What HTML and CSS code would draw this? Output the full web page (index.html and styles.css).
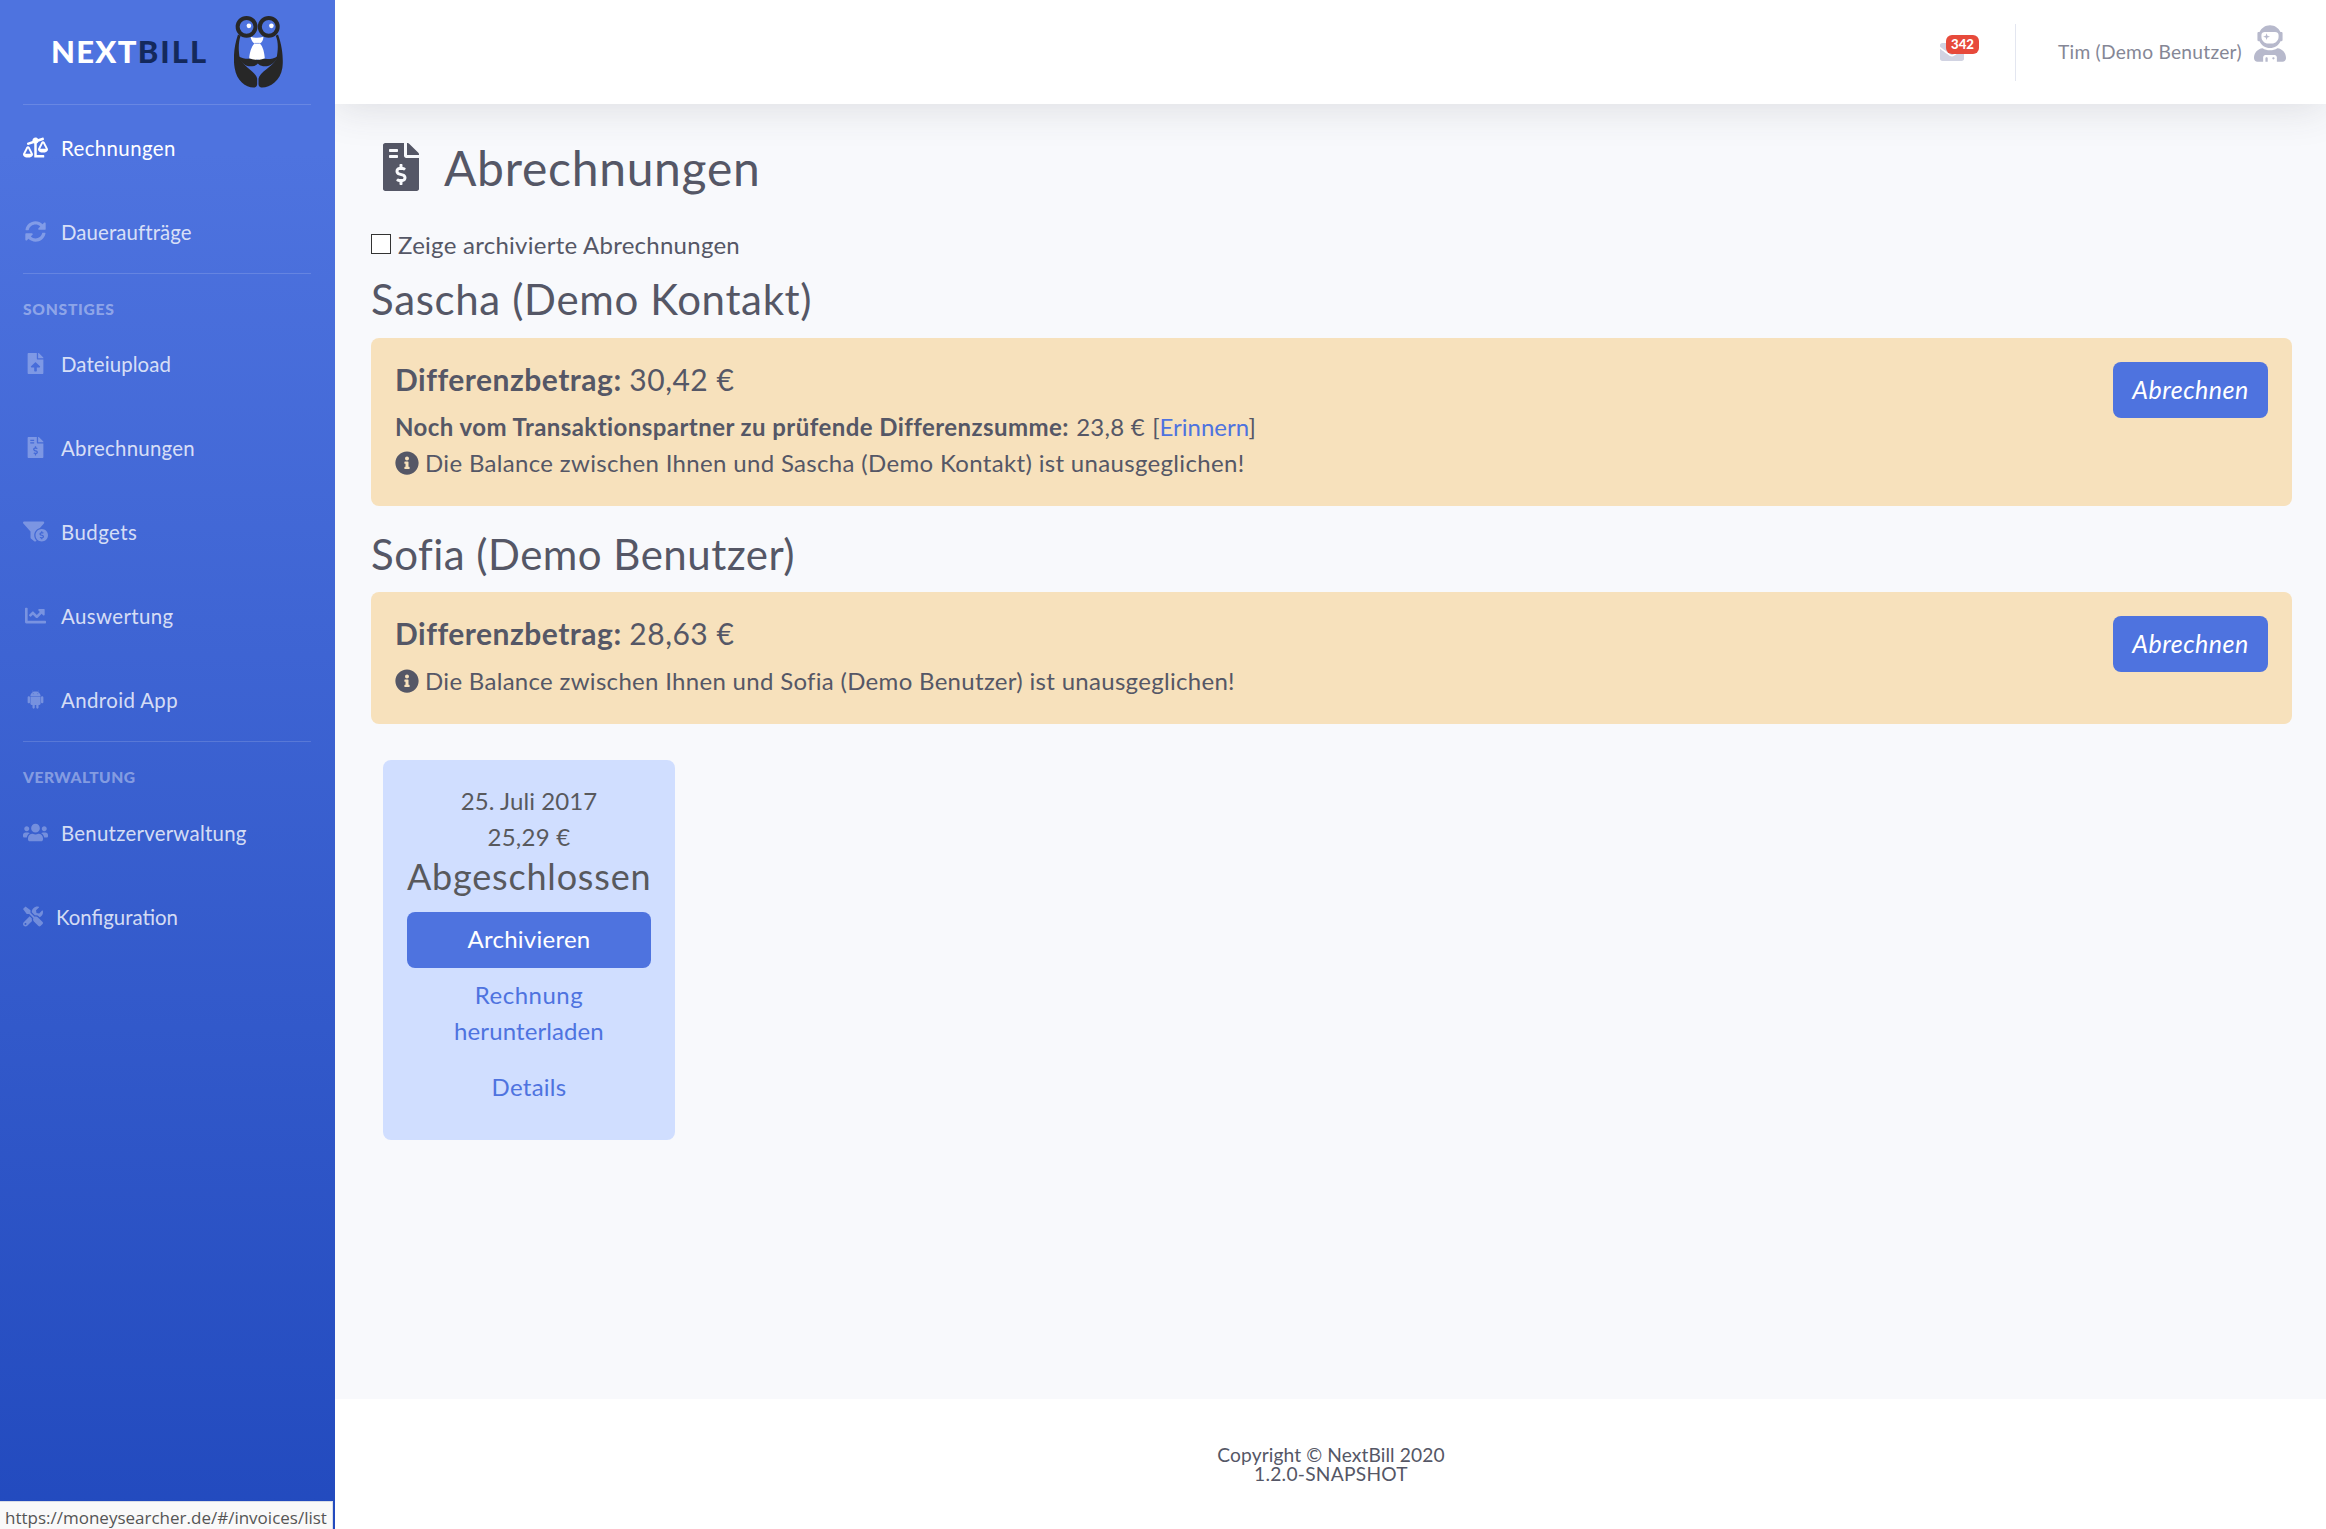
FILE: index.html
```html
<!DOCTYPE html>
<html lang="de">
<head>
<meta charset="utf-8">
<title>NextBill – Abrechnungen</title>
<link rel="stylesheet" href="styles.css">
</head>
<body>
<svg class="defs" width="0" height="0">
<symbol id="i-scale" viewBox="0 0 640 512"><path d="M528 448H352V153.25c20.42-8.94 36.1-26.22 43.38-47.47l132-44.26c8.38-2.81 12.89-11.88 10.08-20.26l-10.17-30.34C524.48 2.54 515.41-1.97 507.03.84L389.11 40.37C375.3 16.36 349.69 0 320 0c-44.18 0-80 35.82-80 80 0 3.43.59 6.71 1.01 10.03l-128.39 43.05c-8.38 2.81-12.89 11.88-10.08 20.26l10.17 30.34c2.81 8.38 11.88 12.89 20.26 10.08l142.05-47.63c4.07 2.77 8.43 5.12 12.99 7.12V496c0 8.84 7.16 16 16 16h224c8.84 0 16-7.16 16-16v-32c-.01-8.84-7.17-16-16.01-16zm111.98-144c0-16.18 1.34-8.73-85.05-181.51-17.65-35.29-68.19-35.36-85.87 0-87.12 174.26-85.04 165.84-85.04 181.51H384c0 44.18 57.3 80 128 80s128-35.82 128-80h-.02zM440 288l72-144 72 144H440zm-269.07-37.51c-17.65-35.29-68.19-35.36-85.87 0C-2.06 424.75.02 416.33.02 432H0c0 44.18 57.3 80 128 80s128-35.82 128-80h-.02c0-16.18 1.34-8.73-85.05-181.51zM56 416l72-144 72 144H56z"/></symbol>
<symbol id="i-sync" viewBox="0 0 512 512"><path d="M370.72 133.28C339.458 104.008 298.888 87.962 255.848 88c-77.458.068-144.328 53.178-162.791 126.85-1.344 5.363-6.122 9.15-11.651 9.15H24.103c-7.498 0-13.194-6.807-11.807-14.176C33.933 94.924 134.813 8 256 8c66.448 0 126.791 26.136 171.315 68.685L463.03 40.97C478.149 25.851 504 36.559 504 57.941V192c0 13.255-10.745 24-24 24H345.941c-21.382 0-32.09-25.851-16.971-40.971l41.75-41.749zM32 296h134.059c21.382 0 32.09 25.851 16.971 40.971l-41.75 41.75c31.262 29.273 71.835 45.319 114.876 45.28 77.418-.07 144.315-53.144 162.787-126.849 1.344-5.363 6.122-9.15 11.651-9.15h57.304c7.498 0 13.194 6.807 11.807 14.176C478.067 417.076 377.187 504 256 504c-66.448 0-126.791-26.136-171.315-68.685L48.97 471.03C33.851 486.149 8 475.441 8 454.059V320c0-13.255 10.745-24 24-24z"/></symbol>
<symbol id="i-upload" viewBox="0 0 384 512"><path d="M224 136V0H24C10.7 0 0 10.7 0 24v464c0 13.3 10.7 24 24 24h336c13.3 0 24-10.7 24-24V160H248c-13.2 0-24-10.8-24-24zm65.18 216.01H224v80c0 8.84-7.16 16-16 16h-32c-8.84 0-16-7.16-16-16v-80H94.82c-14.28 0-21.41-17.29-11.27-27.36l96.42-95.7c6.65-6.61 17.39-6.61 24.04 0l96.42 95.7c10.15 10.07 3.03 27.36-11.25 27.36zM377 105L279.1 7c-4.5-4.5-10.6-7-17-7H256v128h128v-6.1c0-6.3-2.5-12.4-7-16.9z"/></symbol>
<symbol id="i-invoice" viewBox="0 0 384 512"><path d="M377 105L279.1 7c-4.5-4.5-10.6-7-17-7H256v128h128v-6.1c0-6.3-2.5-12.4-7-16.9zm-153 31V0H24C10.7 0 0 10.7 0 24v464c0 13.3 10.7 24 24 24h336c13.3 0 24-10.7 24-24V160H248c-13.2 0-24-10.8-24-24zM64 72c0-4.42 3.58-8 8-8h80c4.42 0 8 3.58 8 8v16c0 4.42-3.58 8-8 8H72c-4.42 0-8-3.58-8-8V72zm0 80v-16c0-4.42 3.58-8 8-8h80c4.42 0 8 3.58 8 8v16c0 4.42-3.58 8-8 8H72c-4.42 0-8-3.58-8-8zm144 263.88V440c0 4.42-3.58 8-8 8h-16c-4.42 0-8-3.58-8-8v-24.29c-11.29-.58-22.27-4.52-31.37-11.35-3.9-2.93-4.1-8.77-.57-12.14l11.75-11.21c2.77-2.64 6.89-2.76 10.13-.73 3.87 2.42 8.26 3.72 12.82 3.72h28.11c6.5 0 11.8-5.92 11.8-13.19 0-5.95-3.61-11.19-8.77-12.73l-45-13.5c-18.59-5.58-31.58-23.42-31.58-43.39 0-24.52 19.05-44.44 42.67-45.07V232c0-4.42 3.58-8 8-8h16c4.42 0 8 3.58 8 8v24.29c11.29.58 22.27 4.51 31.37 11.35 3.9 2.93 4.1 8.77.57 12.14l-11.75 11.21c-2.77 2.64-6.89 2.76-10.13.73-3.87-2.43-8.26-3.72-12.82-3.72h-28.11c-6.5 0-11.8 5.92-11.8 13.19 0 5.95 3.61 11.19 8.77 12.73l45 13.5c18.59 5.58 31.58 23.42 31.58 43.39 0 24.53-19.05 44.44-42.67 45.07z"/></symbol>
<symbol id="i-funnel" viewBox="0 0 640 512"><path d="M433.46 165.94l101.2-111.87C554.61 34.12 540.48 0 512.26 0H31.74C3.52 0-10.61 34.12 9.34 54.07L192 256v155.92c0 12.59 5.93 24.44 16 32l79.99 60c20.86 15.64 48.47 6.97 59.22-13.57C310.8 455.38 288 406.35 288 352c0-89.79 62.05-165.17 145.46-186.06zM480 192c-88.37 0-160 71.63-160 160s71.63 160 160 160 160-71.63 160-160-71.63-160-160-160zm16 239.88V448c0 4.42-3.58 8-8 8h-16c-4.42 0-8-3.58-8-8v-16.29c-11.29-.58-22.27-4.52-31.37-11.35-3.9-2.93-4.1-8.77-.57-12.14l11.75-11.21c2.77-2.64 6.89-2.76 10.13-.73 3.87 2.42 8.26 3.72 12.82 3.72h28.11c6.5 0 11.8-5.92 11.8-13.19 0-5.95-3.61-11.19-8.77-12.73l-45-13.5c-18.59-5.58-31.58-23.42-31.58-43.39 0-24.52 19.05-44.44 42.67-45.07V256c0-4.42 3.58-8 8-8h16c4.42 0 8 3.58 8 8v16.29c11.29.58 22.27 4.51 31.37 11.35 3.9 2.93 4.1 8.77.57 12.14l-11.75 11.21c-2.77 2.64-6.89 2.76-10.13.73-3.87-2.43-8.26-3.72-12.82-3.72h-28.11c-6.5 0-11.8 5.92-11.8 13.19 0 5.95 3.61 11.19 8.77 12.73l45 13.5c18.59 5.58 31.58 23.42 31.58 43.39 0 24.53-19.05 44.44-42.67 45.07z"/></symbol>
<symbol id="i-chart" viewBox="0 0 512 512"><path d="M496 384H64V80c0-8.84-7.16-16-16-16H16C7.16 64 0 71.16 0 80v336c0 17.67 14.33 32 32 32h464c8.84 0 16-7.16 16-16v-32c0-8.84-7.16-16-16-16zM464 96H345.94c-21.38 0-32.09 25.85-16.97 40.97l32.4 32.4L288 242.75l-73.37-73.37c-12.5-12.5-32.76-12.5-45.25 0l-68.69 68.69c-6.25 6.25-6.25 16.38 0 22.63l22.62 22.62c6.25 6.25 16.38 6.25 22.63 0L192 237.25l73.37 73.37c12.5 12.5 32.76 12.5 45.25 0l96-96 32.4 32.4c15.12 15.12 40.97 4.41 40.97-16.97V112c.01-8.84-7.15-16-15.99-16z"/></symbol>
<symbol id="i-android" viewBox="0 0 448 512"><path d="M89.6 204.5v115.8c0 15.4-12.1 27.7-27.5 27.7-15.3 0-30.1-12.4-30.1-27.7V204.5c0-15.1 14.8-27.5 30.1-27.5 15.1 0 27.5 12.4 27.5 27.5zm10.8 157c0 16.4 13.2 29.6 29.6 29.6h19.9l.3 61.1c0 36.9 55.2 36.6 55.2 0v-61.1h37.2v61.1c0 36.7 55.5 36.8 55.5 0v-61.1h20.2c16.2 0 29.4-13.2 29.4-29.6V182.1H100.4v179.4zm248-189.1H99.3c0-42.8 25.6-80 63.6-99.4l-19.1-35.3c-2.8-4.9 4.3-8 6.7-3.8l19.4 35.6c34.9-15.5 75-14.7 108.3 0L297.5 34c2.5-4.3 9.5-1.1 6.7 3.8L285.1 73c37.7 19.4 63.3 56.6 63.3 99.4zm-170.7-55.5c0-5.7-4.6-10.5-10.5-10.5-5.7 0-10.2 4.8-10.2 10.5s4.6 10.5 10.2 10.5c5.9 0 10.5-4.8 10.5-10.5zm113.4 0c0-5.7-4.6-10.5-10.2-10.5-5.9 0-10.5 4.8-10.5 10.5s4.6 10.5 10.5 10.5c5.6 0 10.2-4.8 10.2-10.5zm94.8 60.1c-15.1 0-27.5 12.1-27.5 27.5v115.8c0 15.4 12.4 27.7 27.5 27.7 15.4 0 30.1-12.4 30.1-27.7V204.5c0-15.4-14.8-27.5-30.1-27.5z"/></symbol>
<symbol id="i-users" viewBox="0 0 640 512"><path d="M96 224c35.3 0 64-28.7 64-64s-28.7-64-64-64-64 28.7-64 64 28.7 64 64 64zm448 0c35.3 0 64-28.7 64-64s-28.7-64-64-64-64 28.7-64 64 28.7 64 64 64zm32 32h-64c-17.6 0-33.5 7.1-45.1 18.6 40.3 22.1 68.9 62 75.1 109.4h66c17.7 0 32-14.3 32-32v-32c0-35.3-28.7-64-64-64zm-256 0c61.9 0 112-50.1 112-112S381.9 32 320 32 208 82.1 208 144s50.1 112 112 112zm76.8 32h-8.3c-20.8 10-43.9 16-68.5 16s-47.6-6-68.5-16h-8.3C179.6 288 128 339.6 128 403.2V432c0 26.5 21.5 48 48 48h288c26.5 0 48-21.5 48-48v-28.8c0-63.6-51.6-115.2-115.2-115.2zm-223.7-13.4C161.5 263.1 145.6 256 128 256H64c-35.3 0-64 28.7-64 64v32c0 17.7 14.3 32 32 32h65.9c6.3-47.4 34.9-87.3 75.2-109.4z"/></symbol>
<symbol id="i-tools" viewBox="0 0 512 512"><path d="M501.1 395.7L384 278.6c-23.1-23.1-57.6-27.6-85.4-13.9L192 158.1V96L64 0 0 64l96 128h62.1l106.6 106.6c-13.6 27.8-9.2 62.3 13.9 85.4l117.1 117.1c14.6 14.6 38.2 14.6 52.7 0l52.7-52.7c14.5-14.6 14.5-38.2 0-52.7zM331.7 225c28.3 0 54.9 11 74.9 31l19.4 19.4c15.8-6.9 30.8-16.5 43.8-29.5 37.1-37.1 49.7-89.3 37.9-136.7-2.2-9-13.5-12.1-20.1-5.5l-74.4 74.4-67.9-11.3L334 98.9l74.4-74.4c6.6-6.6 3.4-17.9-5.7-20.2-47.4-11.7-99.6.9-136.6 37.9-28.5 28.5-41.9 66.1-41.2 103.6l82.1 82.1c8.1-1.9 16.5-2.9 24.7-2.9zm-103.9 82l-56.7-56.7L18.7 402.8c-25 25-25 65.5 0 90.5s65.5 25 90.5 0l123.6-123.6c-7.6-19.9-9.9-41.6-5-62.7zM64 472c-13.2 0-24-10.8-24-24 0-13.3 10.7-24 24-24s24 10.7 24 24c0 13.2-10.7 24-24 24z"/></symbol>
<symbol id="i-mail" viewBox="0 0 512 512"><path d="M502.3 190.8c3.9-3.1 9.7-.2 9.7 4.7V400c0 26.5-21.5 48-48 48H48c-26.5 0-48-21.5-48-48V195.6c0-5 5.7-7.8 9.7-4.7 22.4 17.4 52.1 39.5 154.1 113.6 21.1 15.4 56.7 47.8 92.2 47.6 35.7.3 72-32.8 92.3-47.6 102-74.1 131.6-96.3 154-113.7zM256 320c23.2.4 56.6-29.2 73.4-41.4 132.7-96.3 142.8-104.7 173.4-128.7 5.8-4.5 9.2-11.5 9.2-18.9v-19c0-26.5-21.5-48-48-48H48c-26.5 0-48 21.5-48 48v19c0 7.4 3.4 14.3 9.2 18.9 30.6 23.9 40.7 32.4 173.4 128.7 16.8 12.2 50.2 41.8 73.4 41.4z"/></symbol>
<symbol id="i-astro" viewBox="0 0 448 512"><path d="M64 224h13.5c24.7 56.5 80.9 96 146.5 96s121.8-39.5 146.5-96H384c8.8 0 16-7.2 16-16v-96c0-8.8-7.2-16-16-16h-13.5C345.8 39.5 289.6 0 224 0S102.2 39.5 77.5 96H64c-8.8 0-16 7.2-16 16v96c0 8.8 7.2 16 16 16zm40-88c0-22.1 21.5-40 48-40h144c26.5 0 48 17.9 48 40v24c0 53-43 96-96 96h-48c-53 0-96-43-96-96v-24zm72 72l12-36 36-12-36-12-12-36-12 36-36 12 36 12 12 36zm151.6 113.4C297.7 340.7 262.2 352 224 352s-73.7-11.3-103.6-30.6C52.9 328.5 0 385 0 454.4v9.6c0 26.5 21.5 48 48 48h80v-64c0-17.7 14.3-32 32-32h128c17.7 0 32 14.3 32 32v64h80c26.5 0 48-21.5 48-48v-9.6c0-69.4-52.9-125.9-120.4-133zM272 448c-8.8 0-16 7.2-16 16s7.2 16 16 16 16-7.2 16-16-7.2-16-16-16zm-96 0c-8.8 0-16 7.2-16 16v48h32v-48c0-8.8-7.2-16-16-16z"/></symbol>
<symbol id="i-info" viewBox="0 0 512 512"><path d="M256 8C119.043 8 8 119.083 8 256c0 136.997 111.043 248 248 248s248-111.003 248-248C504 119.083 392.957 8 256 8zm0 110c23.196 0 42 18.804 42 42s-18.804 42-42 42-42-18.804-42-42 18.804-42 42-42zm56 254c0 6.627-5.373 12-12 12h-88c-6.627 0-12-5.373-12-12v-24c0-6.627 5.373-12 12-12h12v-64h-12c-6.627 0-12-5.373-12-12v-24c0-6.627 5.373-12 12-12h64c6.627 0 12 5.373 12 12v100h12c6.627 0 12 5.373 12 12v24z"/></symbol>
</svg>
<div class="page">
<nav class="sidebar">
  <a class="brand">
    <span class="brand-name"><span class="next">NEXT</span><span class="bill">BILL</span></span>
    <svg class="owl" viewBox="702 46 148 219">
      <path fill="#272727" d="M714 104C700 145 700 185 704 205C710 245 740 266 764 264Q772 263 772 254V238C770 218 730 200 720 178C714 150 716 125 722 108ZM835 104C850 145 851 185 848 205C842 245 808 266 784 264Q776 263 776 254V238C778 218 820 200 830 178C836 150 836 125 828 108Z"/>
      <path fill="#272727" d="M712 168C735 182 750 176 762 177Q770 177 773 181Q777 177 785 177C800 177 815 182 836 168C828 190 808 203 790 200Q778 198 774 192Q769 199 757 200C738 202 722 190 712 168Z"/>
      <path fill="#fff" d="M752 111Q772 117 791 111Q790 127 780 131C790 140 794 160 795 176Q783 182 773 180Q761 182 748 176C749 160 754 140 764 131Q755 127 752 111Z"/>
      <path stroke="#4e73df" stroke-width="2" d="M764 131H780"/>
      <g fill="none" stroke="#272727" stroke-width="12"><circle cx="740" cy="81" r="27"/><circle cx="807" cy="81" r="27"/></g>
      <circle cx="747" cy="78" r="7" fill="#fff"/><circle cx="815" cy="78" r="7" fill="#fff"/>
    </svg>
  </a>
  <hr class="rule">
  <a class="nav-item active"><svg class="ico"><use href="#i-scale"/></svg><span class="ls-40">Rechnungen</span></a>
  <a class="nav-item"><svg class="ico"><use href="#i-sync"/></svg><span class="ls-10">Daueraufträge</span></a>
  <hr class="rule second">
  <div class="nav-heading ls-75">SONSTIGES</div>
  <a class="nav-item"><svg class="ico"><use href="#i-upload"/></svg><span class="ls-10">Dateiupload</span></a>
  <a class="nav-item"><svg class="ico"><use href="#i-invoice"/></svg><span class="ls-25">Abrechnungen</span></a>
  <a class="nav-item"><svg class="ico"><use href="#i-funnel"/></svg><span class="ls-45">Budgets</span></a>
  <a class="nav-item"><svg class="ico"><use href="#i-chart"/></svg><span class="ls-40">Auswertung</span></a>
  <a class="nav-item"><svg class="ico"><use href="#i-android"/></svg><span class="ls-40">Android App</span></a>
  <hr class="rule">
  <div class="nav-heading ls-50">VERWALTUNG</div>
  <a class="nav-item"><svg class="ico"><use href="#i-users"/></svg><span class="ls-25">Benutzerverwaltung</span></a>
  <a class="nav-item"><svg class="ico narrow"><use href="#i-tools"/></svg><span>Konfiguration</span></a>
</nav>
<div class="content">
  <header class="topbar">
    <a class="alerts"><svg class="mail"><use href="#i-mail"/></svg><span class="badge">342</span></a>
    <div class="topbar-divider"></div>
    <a class="user"><span class="ls-25">Tim (Demo Benutzer)</span><svg class="astro"><use href="#i-astro"/></svg></a>
  </header>
  <main class="main">
    <h1 class="title"><svg class="title-ico"><use href="#i-invoice"/></svg><span class="title-text">Abrechnungen</span></h1>
    <label class="check"><span class="box"></span><span class="check-text ls-25">Zeige archivierte Abrechnungen</span></label>
    <section>
      <h2 class="person">Sascha (Demo Kontakt)</h2>
      <div class="alert">
        <div class="alert-text">
          <p class="sum"><b class="ls-50">Differenzbetrag:</b> <span class="ls-50">30,42 €</span></p>
          <p><b class="ls-42">Noch vom Transaktionspartner zu prüfende Differenzsumme:</b> <span class="value ls-25">23,8 €</span> <span class="remind">[<a class="link">Erinnern</a>]</span></p>
          <p class="info"><svg class="info-ico"><use href="#i-info"/></svg><span class="ls-33">Die Balance zwischen Ihnen und Sascha (Demo Kontakt) ist unausgeglichen!</span></p>
        </div>
        <button class="btn"><i>Abrechnen</i></button>
      </div>
    </section>
    <section>
      <h2 class="person">Sofia (Demo Benutzer)</h2>
      <div class="alert">
        <div class="alert-text">
          <p class="sum"><b class="ls-50">Differenzbetrag:</b> <span class="ls-50">28,63 €</span></p>
          <p class="info"><svg class="info-ico"><use href="#i-info"/></svg><span class="ls-30">Die Balance zwischen Ihnen und Sofia (Demo Benutzer) ist unausgeglichen!</span></p>
        </div>
        <button class="btn"><i>Abrechnen</i></button>
      </div>
      <div class="card">
        <p class="ls-10">25. Juli 2017</p>
        <p class="ls-25">25,29 €</p>
        <h3 class="state">Abgeschlossen</h3>
        <button class="btn wide ls-25">Archivieren</button>
        <a class="card-link"><span class="ls-50">Rechnung</span><br><span class="ls-10">herunterladen</span></a>
        <a class="card-link last ls-25">Details</a>
      </div>
    </section>
  </main>
  <footer class="footer"><span class="ls-10">Copyright © NextBill 2020</span><span class="ls-25">1.2.0-SNAPSHOT</span></footer>
</div>
</div>
<div class="status">https://moneysearcher.de/#/invoices/list</div>
</body>
</html>
```
FILE: styles.css
```css
* { box-sizing: border-box; }
body { margin: 0; font-family: Lato, "Noto Sans", sans-serif; font-size: 24px; line-height: 36px; color: #555766; background: #f8f9fc; }
p, h1, h2, h3 { margin: 0; font-weight: 400; }
svg { fill: currentColor; display: block; flex: none; }
.defs { display: none; }
.ls-10 { letter-spacing: .1px; }
.ls-25 { letter-spacing: .26px; }
.ls-30 { letter-spacing: .305px; }
.ls-33 { letter-spacing: .33px; }
.ls-40 { letter-spacing: .4px; }
.ls-42 { letter-spacing: .44px; }
.ls-45 { letter-spacing: .46px; }
.ls-50 { letter-spacing: .5px; }
.ls-75 { letter-spacing: .75px; }
.page { display: flex; height: 1529px; overflow: hidden; }
.sidebar { width: 335px; flex: none; background: linear-gradient(180deg, #4e73df 10%, #224abe 100%); position: relative; z-index: 2; }
.brand { display: flex; align-items: center; height: 104px; padding-left: 51px; }
.brand-name { font-size: 31px; font-weight: 900; color: #fff; width: 183px; padding-bottom: 3px; white-space: nowrap; }
.next { letter-spacing: 1.3px; }
.bill { color: #14295c; letter-spacing: 2px; }
.owl { width: 49px; height: 73px; margin-bottom: 1px; }
.rule { height: 1px; border: 0; margin: 0 24px 0 23px; background: rgba(255,255,255,.15); }
.nav-item { display: flex; align-items: center; height: 84px; padding-left: 23px; font-size: 20.4px; color: rgba(255,255,255,.8); gap: 13px; }
.nav-item span { padding-top: 2px; }
.nav-item.active { color: #fff; }
.ico { width: 25px; height: 21px; color: rgba(255,255,255,.3); }
.active .ico { color: #fff; }
.ico.narrow { width: 20px; }
.nav-heading { height: 48px; padding: 23px 0 0 23px; font-size: 15.6px; line-height: 24px; font-weight: 900; color: rgba(255,255,255,.4); }
.rule.second + .nav-heading { height: 47px; }
.content { flex: 1; display: flex; flex-direction: column; min-width: 0; }
.topbar { height: 104px; flex: none; background: #fff; box-shadow: 0 3.6px 42px rgba(58,59,69,.15); display: flex; align-items: center; justify-content: flex-end; padding-right: 40px; position: relative; z-index: 1; }
.alerts { position: relative; width: 24px; margin-right: 51px; color: #d1d3e2; }
.mail { width: 24px; height: 24px; }
.badge { position: absolute; left: 6px; top: -5px; width: 33px; height: 19px; border-radius: 6px; background: #e74a3b; color: #fff; font-size: 13.2px; font-weight: 900; line-height: 19px; text-align: center; }
.topbar-divider { width: 1px; height: 57px; background: #e3e6f0; margin-right: 42px; }
.user { display: flex; align-items: center; font-size: 19.2px; color: #858796; }
.user span { width: 196px; }
.astro { width: 32px; height: 37px; color: #b7b9cc; margin-bottom: 17px; }
.main { flex: 1; padding: 34px 34px 0 36px; }
.title { display: flex; align-items: center; height: 58px; font-size: 48px; line-height: 58px; padding-left: 12px; gap: 25px; letter-spacing: .72px; }
.title-text { padding-top: 2px; }
.title-ico { width: 36px; height: 48px; }
.check { display: flex; align-items: center; margin-top: 30px; gap: 7px; }
.check-text { padding-top: 1px; line-height: 35px; }
.box { width: 20px; height: 20px; border: 1px solid #333; background: #fff; }
.person { font-size: 42px; line-height: 50px; margin: 12px 0 14px; letter-spacing: .65px; }
section + section .person { margin: 23px 0 13px; letter-spacing: .48px; }
.alert { display: flex; justify-content: space-between; align-items: flex-start; background: #f7e1bc; border-radius: 8px; padding: 24px 24px 25px; }
.alert-text { margin-top: -1px; }
.sum { font-size: 30px; margin-bottom: 12px; }
.value { margin-left: 1px; }
.remind { margin-left: 1px; }
.link, .card-link { color: #4e73df; }
.info { display: flex; align-items: center; gap: 6px; }
.info-ico { width: 24px; height: 24px; }
.btn { border: 0; border-radius: 8px; background: #4e73df; color: #fff; font-family: inherit; font-size: 24px; line-height: 36px; height: 56px; width: 155px; padding: 0 0 2px; }
.btn i { font-size: 25px; letter-spacing: .5px; }
.btn.wide { width: 100%; display: block; margin-top: 14px; }
.card { width: 292px; height: 380px; background: #d0deff; border-radius: 8px; margin: 36px 0 0 12px; padding: 23px 24px 0; text-align: center; color: #58595d; }
.state { font-size: 36px; line-height: 43px; letter-spacing: .8px; white-space: nowrap; }
.card-link { display: block; margin-top: 9px; }
.card-link.last { margin-top: 20px; }
.footer { height: 130px; flex: none; background: #fff; display: flex; flex-direction: column; align-items: center; padding: 46px 0 0 1px; font-size: 19.2px; line-height: 19px; }
.status { position: absolute; z-index: 5; left: 0; bottom: 0; width: 333px; height: 28px; background: #f9f9f9; border-top: 1px solid #d8dce6; border-right: 1px solid #d8dce6; padding-left: 5px; font: 17px/31px "Open Sans", "Noto Sans", sans-serif; color: #555; white-space: nowrap; }
```
